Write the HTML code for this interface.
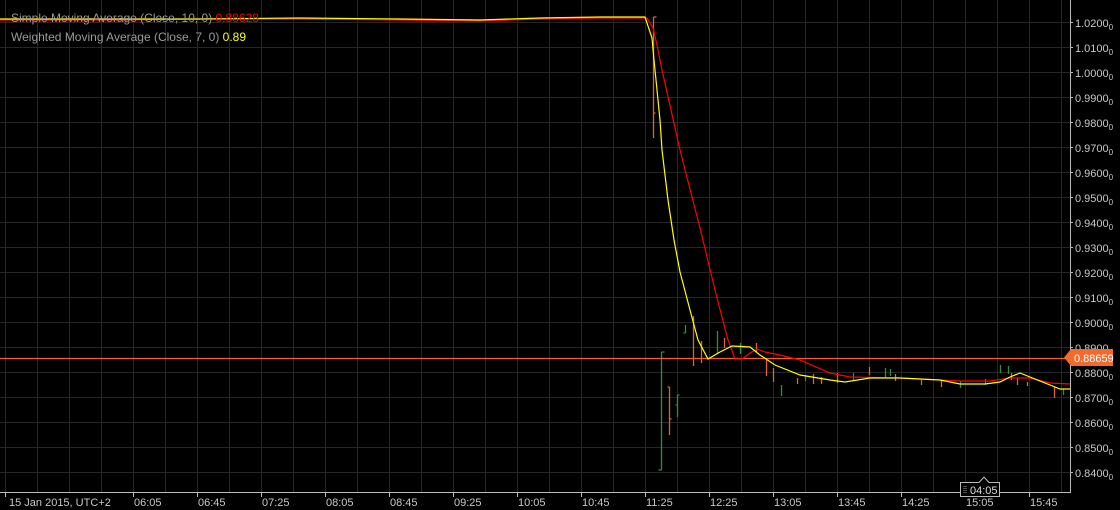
<!DOCTYPE html>
<html><head><meta charset="utf-8"><style>
body{margin:0;background:#000;width:1120px;height:510px;overflow:hidden;font-family:"Liberation Sans",sans-serif}
svg{position:absolute;left:0;top:0}
</style></head><body>
<svg width="1120" height="510" xmlns="http://www.w3.org/2000/svg" font-family="Liberation Sans, sans-serif">
<g stroke="#262626" stroke-width="1">
<path d="M5.5 0V492M37.5 0V492M69.5 0V492M101.5 0V492M133.5 0V492M165.5 0V492M197.5 0V492M229.5 0V492M261.5 0V492M293.5 0V492M325.5 0V492M357.5 0V492M389.5 0V492M421.5 0V492M453.5 0V492M485.5 0V492M517.5 0V492M549.5 0V492M581.5 0V492M613.5 0V492M645.5 0V492M677.5 0V492M709.5 0V492M741.5 0V492M773.5 0V492M805.5 0V492M837.5 0V492M869.5 0V492M901.5 0V492M933.5 0V492M965.5 0V492M997.5 0V492M1029.5 0V492M1061.5 0V492"/>
<path d="M0 22.5H1070M0 47.5H1070M0 72.5H1070M0 97.5H1070M0 122.5H1070M0 147.5H1070M0 172.5H1070M0 197.5H1070M0 222.5H1070M0 247.5H1070M0 272.5H1070M0 297.5H1070M0 322.5H1070M0 347.5H1070M0 372.5H1070M0 397.5H1070M0 422.5H1070M0 447.5H1070M0 472.5H1070"/>
</g>
<path d="M1070.5 0V492.5H0" stroke="#bbb" fill="none"/>
<g stroke="#bbb"><path d="M5.5 492V497M133.5 492V497M197.5 492V497M261.5 492V497M325.5 492V497M389.5 492V497M453.5 492V497M517.5 492V497M581.5 492V497M645.5 492V497M709.5 492V497M773.5 492V497M837.5 492V497M901.5 492V497M965.5 492V497M1029.5 492V497"/>
<path d="M1070 22.5h3M1070 47.5h3M1070 72.5h3M1070 97.5h3M1070 122.5h3M1070 147.5h3M1070 172.5h3M1070 197.5h3M1070 222.5h3M1070 247.5h3M1070 272.5h3M1070 297.5h3M1070 322.5h3M1070 347.5h3M1070 372.5h3M1070 397.5h3M1070 422.5h3M1070 447.5h3M1070 472.5h3"/></g>
<g fill="#c8c8c8" font-size="11">
<text x="9" y="506">15 Jan 2015, UTC+2</text>
<text x="134" y="506">06:05</text><text x="198" y="506">06:45</text><text x="262" y="506">07:25</text><text x="326" y="506">08:05</text><text x="390" y="506">08:45</text><text x="454" y="506">09:25</text><text x="518" y="506">10:05</text><text x="582" y="506">10:45</text><text x="646" y="506">11:25</text><text x="710" y="506">12:25</text><text x="774" y="506">13:05</text><text x="838" y="506">13:45</text><text x="902" y="506">14:25</text><text x="966" y="506">15:05</text><text x="1030" y="506">15:45</text>
</g>
<g fill="#c8c8c8" font-size="11">
<text x="1075" y="27">1.0200<tspan font-size="8" dy="3">0</tspan></text>
<text x="1075" y="52">1.0100<tspan font-size="8" dy="3">0</tspan></text>
<text x="1075" y="77">1.0000<tspan font-size="8" dy="3">0</tspan></text>
<text x="1075" y="102">0.9900<tspan font-size="8" dy="3">0</tspan></text>
<text x="1075" y="127">0.9800<tspan font-size="8" dy="3">0</tspan></text>
<text x="1075" y="152">0.9700<tspan font-size="8" dy="3">0</tspan></text>
<text x="1075" y="177">0.9600<tspan font-size="8" dy="3">0</tspan></text>
<text x="1075" y="202">0.9500<tspan font-size="8" dy="3">0</tspan></text>
<text x="1075" y="227">0.9400<tspan font-size="8" dy="3">0</tspan></text>
<text x="1075" y="252">0.9300<tspan font-size="8" dy="3">0</tspan></text>
<text x="1075" y="277">0.9200<tspan font-size="8" dy="3">0</tspan></text>
<text x="1075" y="302">0.9100<tspan font-size="8" dy="3">0</tspan></text>
<text x="1075" y="327">0.9000<tspan font-size="8" dy="3">0</tspan></text>
<text x="1075" y="352">0.8900<tspan font-size="8" dy="3">0</tspan></text>
<text x="1075" y="377">0.8800<tspan font-size="8" dy="3">0</tspan></text>
<text x="1075" y="402">0.8700<tspan font-size="8" dy="3">0</tspan></text>
<text x="1075" y="427">0.8600<tspan font-size="8" dy="3">0</tspan></text>
<text x="1075" y="452">0.8500<tspan font-size="8" dy="3">0</tspan></text>
<text x="1075" y="477">0.8400<tspan font-size="8" dy="3">0</tspan></text>
</g>
<g stroke="#2f8f3f" fill="none" stroke-width="1.3">
<path d="M661.5 352V470M661.5 352h3M661.5 470h-3"/><path d="M677.5 395V417M677.5 395h2M677.5 405h-2"/>
<path d="M685.5 325V333M685.5 333h-2"/><path d="M717.5 331V353"/><path d="M740.5 343V354"/>
<path d="M781.5 385V396"/><path d="M805.5 375V381"/><path d="M853.5 373V380"/><path d="M885.5 368V378"/>
<path d="M890.5 369V376"/><path d="M960.5 381V388"/><path d="M985.5 379V385"/><path d="M1000.5 365V373"/><path d="M1008.5 366V374"/><path d="M1063.5 389V395"/>
</g>
<g stroke="#e8622e" fill="none" stroke-width="1.3">
<path d="M653.5 17V138M653.5 17h3M653.5 113h2"/><path d="M669.5 387V435M669.5 387h-2M669.5 419h2"/>
<path d="M693.5 316V366"/><path d="M701.5 341V363"/><path d="M724.5 338V348"/><path d="M756.5 343V352"/>
<path d="M766.5 360V376"/><path d="M773.5 368V382"/><path d="M797.5 378V384"/><path d="M813.5 374V384"/><path d="M821.5 377V384"/>
<path d="M837.5 373V383"/><path d="M869.5 367V375"/><path d="M895.5 374V381"/><path d="M921.5 380V385"/><path d="M941.5 381V387"/>
<path d="M1011.5 373V380"/><path d="M1017.5 378V385"/><path d="M1027.5 382V386"/><path d="M1054.5 387V398"/>
</g>
<path d="M0 358.5H1070" stroke="#ff5a1f" stroke-width="1.2"/>
<polyline fill="none" stroke="#f00" stroke-width="1.2" points="0,20 120,20 200,19 300,19 400,20 480,21 540,19 600,18 647,18 653,28 657,45 662,70 680,150 700,228 715,290 728,340 735,359 742,359 750,353 757,349 765,352 780,355 800,360 830,373 850,377 900,378 960,381 990,381 1010,378 1030,378 1050,383 1070,384"/>
<polyline fill="none" stroke="#ff0" stroke-width="1.2" points="0,19 200,19 300,18 400,19 480,20 540,18 600,17 645,17 652,38 654,60 656,80 658,100 660,120 662,150 668,200 674,240 680,272 690,310 698,340 708,359 720,352 732,346 750,347 760,355 775,365 800,375 830,380 845,382 870,378 900,378 940,380 960,384 985,384 1000,382 1010,377 1020,373 1030,377 1050,385 1060,389 1070,389"/>
<path d="M1064 357.5L1071 349H1113V366H1071Z" fill="#f26a2e"/>
<text x="1074" y="362" fill="#fff" font-size="11">0.88659</text>
<path d="M960.5 482.5H979L984 477L989 482.5H999.5V496.5H960.5Z" fill="#000" stroke="#bbb"/>
<text x="970" y="494" fill="#ddd" font-size="11">04:05</text>
<path d="M964 486v8M966 486v8" stroke="#999" stroke-dasharray="1 1"/>
<text x="11" y="22" font-size="12" fill="#9a9a9a">Simple Moving Average (Close, 10, 0) <tspan fill="#f00">0.88628</tspan></text>
<text x="11" y="41" font-size="12" fill="#9a9a9a">Weighted Moving Average (Close, 7, 0) <tspan fill="#ff0">0.89</tspan></text>
</svg>
</body></html>
